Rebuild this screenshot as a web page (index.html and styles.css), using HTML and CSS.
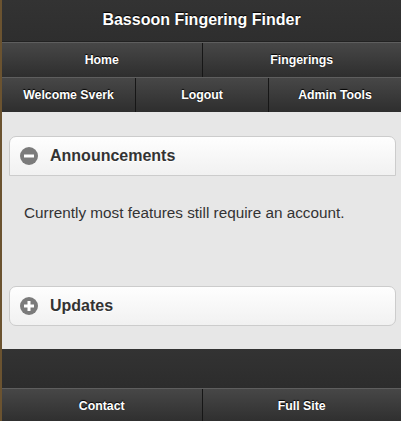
FILE: index.html
```html
<!DOCTYPE html>
<html>
<head>
<meta charset="utf-8">
<link rel="stylesheet" href="styles.css">
</head>
<body>
<div class="page">
  <header class="bar header">
    <h1 class="title">Bassoon Fingering Finder</h1>
    <nav class="navbar two">
      <a class="btn">Home</a>
      <a class="btn">Fingerings</a>
    </nav>
    <nav class="navbar three">
      <a class="btn">Welcome Sverk</a>
      <a class="btn">Logout</a>
      <a class="btn">Admin Tools</a>
    </nav>
  </header>
  <main class="content">
    <section class="collapsible open">
      <div class="coll-head">
        <span class="icon"><svg width="18" height="18" viewBox="0 0 18 18"><circle cx="9" cy="9" r="9" fill="#7b7b7b"/><rect x="4" y="7.5" width="10" height="3" fill="#fff"/></svg></span>
        <span class="coll-title">Announcements</span>
      </div>
      <div class="coll-body">Currently most features still require an account.</div>
    </section>
    <section class="collapsible closed">
      <div class="coll-head">
        <span class="icon"><svg width="18" height="18" viewBox="0 0 18 18"><circle cx="9" cy="9" r="9" fill="#7b7b7b"/><rect x="4" y="7.5" width="10" height="3" fill="#fff"/><rect x="7.5" y="4" width="3" height="10" fill="#fff"/></svg></span>
        <span class="coll-title">Updates</span>
      </div>
    </section>
  </main>
  <footer class="bar footer">
    <div class="footer-space"></div>
    <nav class="navbar two">
      <a class="btn">Contact</a>
      <a class="btn">Full Site</a>
    </nav>
  </footer>
</div>
</body>
</html>
```
FILE: styles.css
```css
html, body {
  margin: 0;
  padding: 0;
  background: #e7e7e7;
}
body {
  font-family: "Liberation Sans", Arial, sans-serif;
}
.page {
  border-left: 2px solid #6b5330;
  min-height: 421px;
  display: flex;
  flex-direction: column;
}
.bar {
  background: linear-gradient(#333333, #262626);
}
.title {
  margin: 0;
  height: 41px;
  line-height: 39px;
  text-align: center;
  color: #fff;
  font-size: 16px;
  font-weight: bold;
  text-shadow: 0 -1px 1px #000;
  border-bottom: 1px solid #222;
}
.navbar {
  display: grid;
  border-top: 1px solid #5e5e5e;
}
.navbar.two { grid-template-columns: 1fr 1fr; }
.navbar.three { grid-template-columns: 1fr 1fr 1fr; }
.btn {
  display: block;
  text-align: center;
  color: #fff;
  font-size: 12.3px;
  font-weight: bold;
  text-shadow: 0 -1px 1px #000;
  background: linear-gradient(#474747, #2e2e2e);
  border-left: 1px solid #161616;
  height: 34px;
  line-height: 34px;
}
.btn:first-child { border-left: none; }
.content {
  flex: 1;
  background: #e7e7e7;
  padding: 24px 5px 23px 7px;
  display: flex;
  flex-direction: column;
  gap: 10px;
}
.collapsible {
  display: flex;
  flex-direction: column;
}
.coll-head {
  display: flex;
  align-items: center;
  height: 38px;
  background: linear-gradient(#fefefe, #f1f1f1);
  border: 1px solid #cccccc;
  border-radius: 7px 7px 0 0;
  color: #333;
}
.closed .coll-head { border-radius: 7px; }
.icon {
  display: flex;
  margin-left: 10px;
  margin-right: 12px;
}
.coll-title {
  font-size: 16px;
  font-weight: bold;
  text-shadow: 0 1px 0 #fff;
}
.coll-body {
  padding: 28px 15px 0 15px;
  height: 72px;
  font-size: 15.3px;
  color: #333;
}
.footer-space {
  height: 39px;
}
```
